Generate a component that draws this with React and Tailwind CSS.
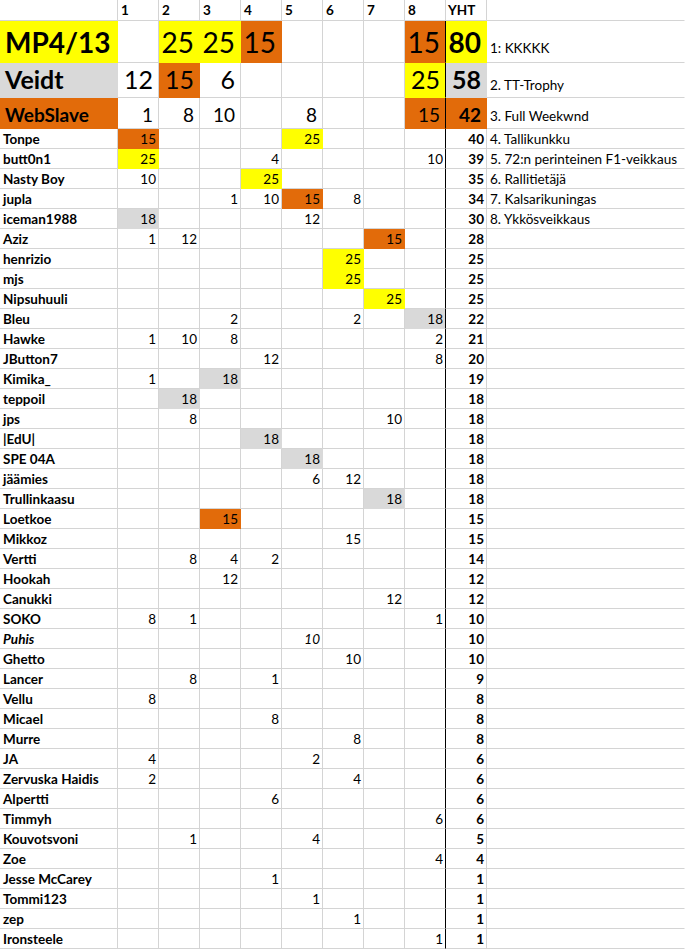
import React from "react";

// fill colours: o = orange, y = yellow, g = grey
const FILL = {
  o: { bg: "bg-[#e26b0a]", b: "border-b-[#e26b0a]", r: "border-r-[#e26b0a]" },
  y: { bg: "bg-[#ffff00]", b: "border-b-[#ffff00]", r: "border-r-[#ffff00]" },
  g: { bg: "bg-[#d9d9d9]", b: "border-b-[#d9d9d9]", r: "border-r-[#d9d9d9]" },
};

const BIG = [
  {
    name: "MP4/13",
    fill: "y",
    cells: [0, [25, "y"], [25, "y"], [15, "o"], 0, 0, 0, [15, "o"]],
    total: [80, "y"],
    label: "1: KKKKK",
    text: "text-[28px]",
    pb: "pb-[6px]",
    labelPb: "pb-[7px]",
  },
  {
    name: "Veidt",
    fill: "g",
    cells: [12, [15, "o"], 6, 0, 0, 0, 0, [25, "y"]],
    total: [58, "g"],
    label: "2. TT-Trophy",
    text: "text-[25px]",
    pb: "pb-[5px]",
    labelPb: "pb-[5px]",
  },
  {
    name: "WebSlave",
    fill: "o",
    cells: [1, 8, 10, 0, 8, 0, 0, [15, "o"]],
    total: [42, "o"],
    label: "3. Full Weekwnd",
    text: "text-[19px]",
    pb: "pb-[4px]",
    labelPb: "pb-[5px]",
  },
];

const ROWS = [
  ["Tonpe", [[15, "o"], 0, 0, 0, [25, "y"], 0, 0, 0], 40],
  ["butt0n1", [[25, "y"], 0, 0, 4, 0, 0, 0, 10], 39],
  ["Nasty Boy", [10, 0, 0, [25, "y"], 0, 0, 0, 0], 35],
  ["jupla", [0, 0, 1, 10, [15, "o"], 8, 0, 0], 34],
  ["iceman1988", [[18, "g"], 0, 0, 0, 12, 0, 0, 0], 30],
  ["Aziz", [1, 12, 0, 0, 0, 0, [15, "o"], 0], 28],
  ["henrizio", [0, 0, 0, 0, 0, [25, "y"], 0, 0], 25],
  ["mjs", [0, 0, 0, 0, 0, [25, "y"], 0, 0], 25],
  ["Nipsuhuuli", [0, 0, 0, 0, 0, 0, [25, "y"], 0], 25],
  ["Bleu", [0, 0, 2, 0, 0, 2, 0, [18, "g"]], 22],
  ["Hawke", [1, 10, 8, 0, 0, 0, 0, 2], 21],
  ["JButton7", [0, 0, 0, 12, 0, 0, 0, 8], 20],
  ["Kimika_", [1, 0, [18, "g"], 0, 0, 0, 0, 0], 19],
  ["teppoil", [0, [18, "g"], 0, 0, 0, 0, 0, 0], 18],
  ["jps", [0, 8, 0, 0, 0, 0, 10, 0], 18],
  ["|EdU|", [0, 0, 0, [18, "g"], 0, 0, 0, 0], 18],
  ["SPE 04A", [0, 0, 0, 0, [18, "g"], 0, 0, 0], 18],
  ["jäämies", [0, 0, 0, 0, 6, 12, 0, 0], 18],
  ["Trullinkaasu", [0, 0, 0, 0, 0, 0, [18, "g"], 0], 18],
  ["Loetkoe", [0, 0, [15, "o"], 0, 0, 0, 0, 0], 15],
  ["Mikkoz", [0, 0, 0, 0, 0, 15, 0, 0], 15],
  ["Vertti", [0, 8, 4, 2, 0, 0, 0, 0], 14],
  ["Hookah", [0, 0, 12, 0, 0, 0, 0, 0], 12],
  ["Canukki", [0, 0, 0, 0, 0, 0, 12, 0], 12],
  ["SOKO", [8, 1, 0, 0, 0, 0, 0, 1], 10],
  ["Puhis", [0, 0, 0, 0, 10, 0, 0, 0], 10, true],
  ["Ghetto", [0, 0, 0, 0, 0, 10, 0, 0], 10],
  ["Lancer", [0, 8, 0, 1, 0, 0, 0, 0], 9],
  ["Vellu", [8, 0, 0, 0, 0, 0, 0, 0], 8],
  ["Micael", [0, 0, 0, 8, 0, 0, 0, 0], 8],
  ["Murre", [0, 0, 0, 0, 0, 8, 0, 0], 8],
  ["JA", [4, 0, 0, 0, 2, 0, 0, 0], 6],
  ["Zervuska Haidis", [2, 0, 0, 0, 0, 4, 0, 0], 6],
  ["Alpertti", [0, 0, 0, 6, 0, 0, 0, 0], 6],
  ["Timmyh", [0, 0, 0, 0, 0, 0, 0, 6], 6],
  ["Kouvotsvoni", [0, 1, 0, 0, 4, 0, 0, 0], 5],
  ["Zoe", [0, 0, 0, 0, 0, 0, 0, 4], 4],
  ["Jesse McCarey", [0, 0, 0, 1, 0, 0, 0, 0], 1],
  ["Tommi123", [0, 0, 0, 0, 1, 0, 0, 0], 1],
  ["zep", [0, 0, 0, 0, 0, 1, 0, 0], 1],
  ["Ironsteele", [0, 0, 0, 0, 0, 0, 0, 1], 1],
];

// labels that spill over the right column, starting at the 4th player row
const LABELS = [
  "4. Tallikunkku",
  "5. 72:n perinteinen F1-veikkaus",
  "6. Rallitietäjä",
  "7. Kalsarikuningas",
  "8. Ykkösveikkaus",
];

function Cell({ fill, black, last, className = "", children }) {
  const f = fill ? FILL[fill] : null;
  const bottom = f ? f.b : "border-b-[#d4d4d4]";
  let right = f ? f.r : "border-r-[#d4d4d4]";
  if (black) right = "border-r-black";
  if (last) right = "border-r-transparent";
  return (
    <div
      className={`flex items-end whitespace-nowrap border-b border-r ${bottom} ${right} ${f ? f.bg : ""} ${className}`}
    >
      {children}
    </div>
  );
}

const split = (v) => (Array.isArray(v) ? v : [v || null, null]);

export default function App() {
  return (
    <div className="grid w-[685px] grid-cols-[118px_repeat(9,41px)_198px] grid-rows-[21px_42px_35px_31px] auto-rows-[20px] overflow-hidden bg-white font-['Lato',sans-serif] text-black">
      {/* header */}
      <Cell />
      {[1, 2, 3, 4, 5, 6, 7, 8].map((n) => (
        <Cell key={n} className="pb-[3px] pl-[3px] text-[13.5px] font-bold leading-none">
          {n}
        </Cell>
      ))}
      <Cell className="pb-[3px] pl-[2px] text-[13.5px] font-bold leading-none">YHT</Cell>
      <Cell last />

      {/* big top three */}
      {BIG.map((r) => {
        const [tot, totFill] = r.total;
        return (
          <React.Fragment key={r.name}>
            <Cell fill={r.fill} className={`pl-[5px] font-bold leading-none ${r.text} ${r.pb}`}>
              {r.name}
            </Cell>
            {r.cells.map((c, i) => {
              const [v, f] = split(c);
              return (
                <Cell
                  key={i}
                  fill={f}
                  black={i === 7}
                  className={`justify-end pr-[5px] leading-none ${r.text} ${r.pb}`}
                >
                  {v}
                </Cell>
              );
            })}
            <Cell fill={totFill} className={`justify-end pr-[5px] font-bold leading-none ${r.text} ${r.pb}`}>
              {tot}
            </Cell>
            <Cell last className={`pl-[3px] text-[13.5px] leading-none ${r.labelPb}`}>
              {r.label}
            </Cell>
          </React.Fragment>
        );
      })}

      {/* everyone else */}
      {ROWS.map(([name, cells, total, italic], idx) => (
        <React.Fragment key={name}>
          <Cell className={`pb-[2px] pl-[3px] text-[13.5px] font-bold leading-none ${italic ? "italic" : ""}`}>
            {name}
          </Cell>
          {cells.map((c, i) => {
            const [v, f] = split(c);
            return (
              <Cell
                key={i}
                fill={f}
                black={i === 7}
                className={`justify-end pb-[2px] pr-[2px] text-[13.5px] leading-none ${italic ? "italic" : ""}`}
              >
                {v}
              </Cell>
            );
          })}
          <Cell className="justify-end pb-[2px] pr-[2px] text-[13.5px] font-bold leading-none">{total}</Cell>
          <Cell last className="pb-[2px] pl-[3px] text-[13.5px] leading-none">
            {LABELS[idx]}
          </Cell>
        </React.Fragment>
      ))}
    </div>
  );
}
